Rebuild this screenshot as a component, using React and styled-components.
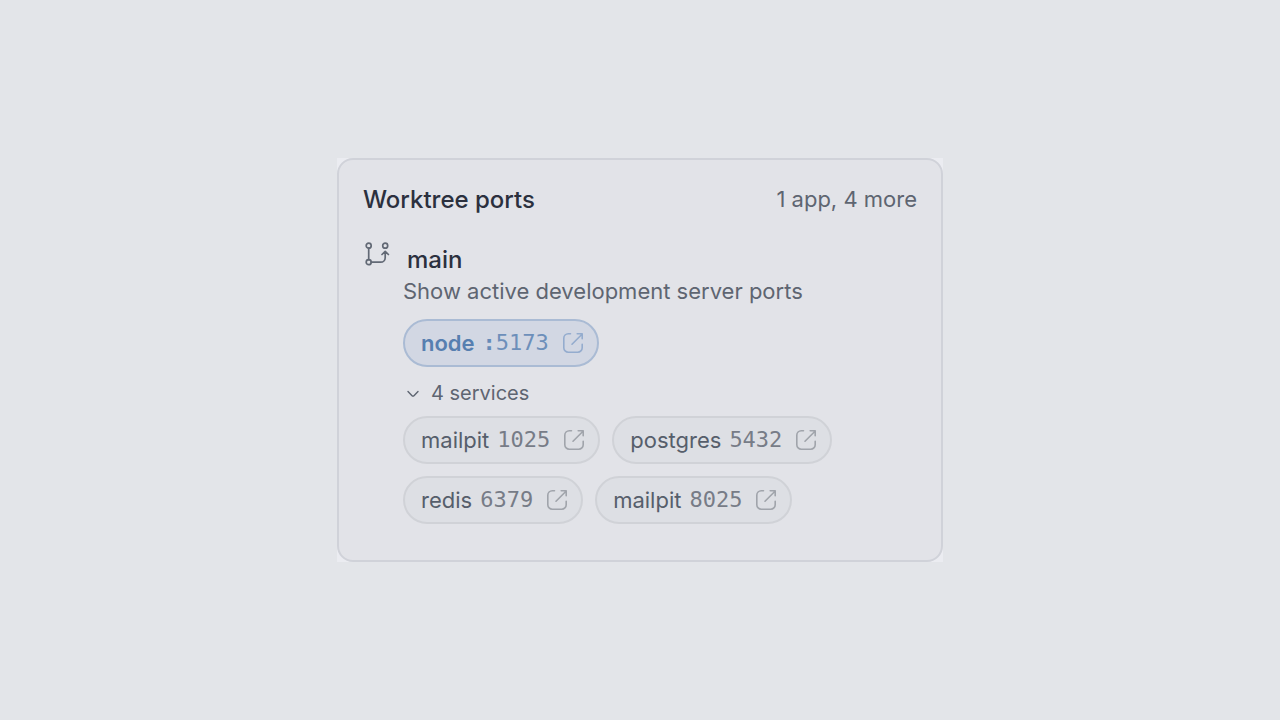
import React, { useState } from "react";
import styled, { createGlobalStyle, css } from "styled-components";

const GlobalStyle = createGlobalStyle`
  *, *::before, *::after { box-sizing: border-box; }
  body {
    margin: 0;
    background: #e3e5e9;
    font-family: Inter, "Liberation Sans", sans-serif;
    -webkit-font-smoothing: antialiased;
  }
`;

const Page = styled.main`
  min-height: 100vh;
  display: flex;
  align-items: center;
  justify-content: center;
`;

const Backdrop = styled.div`
  width: 100%;
  max-width: 606px;
  background: #ebecf1;
`;

const Card = styled.section`
  padding: 24px 24px 36px;
  border: 2px solid #d0d2d9;
  border-radius: 16px;
  background: #e2e3e8;
`;

const Header = styled.header`
  display: flex;
  align-items: flex-start;
  justify-content: space-between;
  margin-bottom: 28px;
`;

const Title = styled.h1`
  margin: 0;
  font-size: 24px;
  line-height: 32px;
  font-weight: 500;
  color: #2b303e;
`;

const Summary = styled.span`
  font-size: 22px;
  line-height: 30px;
  color: #5e6571;
`;

const Worktree = styled.div`
  display: flex;
  align-items: flex-start;
  gap: 12px;
`;

const BranchIcon = styled.svg`
  flex: none;
  width: 28px;
  height: 28px;
  margin-top: -4px;
  color: #626975;
`;

const Details = styled.div`
  flex: 1;
  min-width: 0;
`;

const Name = styled.h2`
  margin: 0;
  padding-left: 4px;
  font-size: 24px;
  line-height: 32px;
  font-weight: 500;
  color: #2b303e;
`;

const Description = styled.p`
  margin: 0 0 13px;
  font-size: 22px;
  line-height: 30px;
  color: #5e6571;
`;

const PortList = styled.div`
  display: flex;
  flex-wrap: wrap;
  gap: 12px;
`;

const Port = styled.a`
  display: inline-flex;
  align-items: center;
  height: 48px;
  padding: 0 12px 0 16px;
  border: 2px solid #d0d2d7;
  border-radius: 24px;
  background: #dddfe4;
  color: #565e6b;
  font-size: 22px;
  line-height: 30px;
  font-weight: 400;
  text-decoration: none;
  ${(p) => p.$primary && css`
    border-color: #aabbd4;
    background: #d2d7e3;
    color: #577fb0;
    font-weight: 600;
  `}
`;

const Number = styled.span`
  margin-left: 8px;
  font-family: "DejaVu Sans Mono", monospace;
  font-weight: 400;
  color: ${(p) => (p.$primary ? "#6d8fba" : "#777c87")};
`;

const Colon = styled.b`
  color: #668bb8;
`;

const OpenIcon = styled.svg`
  width: 24px;
  height: 24px;
  margin-left: 12px;
  color: ${(p) => (p.$primary ? "#94acce" : "#a0a4ab")};
`;

const Toggle = styled.button`
  display: flex;
  align-items: center;
  gap: 8px;
  margin: 12px 0 9px;
  padding: 0;
  border: 0;
  background: none;
  color: #5e6571;
  font-family: inherit;
  font-size: 20px;
  line-height: 28px;
  cursor: pointer;
`;

const Chevron = styled.svg`
  width: 20px;
  height: 20px;
`;

const services = [
  { name: "mailpit", port: 1025 },
  { name: "postgres", port: 5432 },
  { name: "redis", port: 6379 },
  { name: "mailpit", port: 8025 },
];

function PortLink({ name, port, primary }) {
  return (
    <Port href={`http://localhost:${port}`} $primary={primary}>
      {name}
      <Number $primary={primary}>
        {primary && <Colon>:</Colon>}
        {port}
      </Number>
      <OpenIcon $primary={primary} viewBox="0 0 24 24" fill="none" stroke="currentColor" strokeWidth="1.6" strokeLinecap="round" strokeLinejoin="round" aria-hidden="true">
        <path d="M9.5 2.8H7.3a4.5 4.5 0 0 0-4.5 4.5v9.4a4.5 4.5 0 0 0 4.5 4.5h9.4a4.5 4.5 0 0 0 4.5-4.5v-3.5" />
        <path d="M11 13.2 21 3.2M16.2 2.8h5v5" />
      </OpenIcon>
    </Port>
  );
}

export default function App() {
  const [open, setOpen] = useState(true);
  return (
    <>
      <GlobalStyle />
      <Page>
        <Backdrop>
          <Card>
            <Header>
              <Title>Worktree ports</Title>
              <Summary>1 app, 4 more</Summary>
            </Header>
            <Worktree>
              <BranchIcon viewBox="0 0 28 28" fill="none" stroke="currentColor" strokeWidth="1.7" strokeLinecap="round" strokeLinejoin="round" aria-hidden="true">
                <circle cx="5.7" cy="5.7" r="2.5" />
                <circle cx="22.2" cy="5.7" r="2.5" />
                <circle cx="5.7" cy="22.2" r="2.5" />
                <path d="M5.7 8.2v11.5M8.2 22.2h9.5a4.5 4.5 0 0 0 4.5-4.5v-6M19 14.5l3.2-3.2 3.2 3.2" />
              </BranchIcon>
              <Details>
                <Name>main</Name>
                <Description>Show active development server ports</Description>
                <PortList>
                  <PortLink name="node" port={5173} primary />
                </PortList>
                <Toggle type="button" aria-expanded={open} onClick={() => setOpen(!open)}>
                  <Chevron viewBox="0 0 20 20" fill="none" stroke="currentColor" strokeWidth="1.4" strokeLinecap="round" strokeLinejoin="round" aria-hidden="true">
                    <path d="m5 8.5 3.8 4q1.2 1.2 2.4 0l3.8-4" />
                  </Chevron>
                  4 services
                </Toggle>
                {open && (
                  <PortList>
                    {services.map((s) => (
                      <PortLink key={s.port} name={s.name} port={s.port} />
                    ))}
                  </PortList>
                )}
              </Details>
            </Worktree>
          </Card>
        </Backdrop>
      </Page>
    </>
  );
}
